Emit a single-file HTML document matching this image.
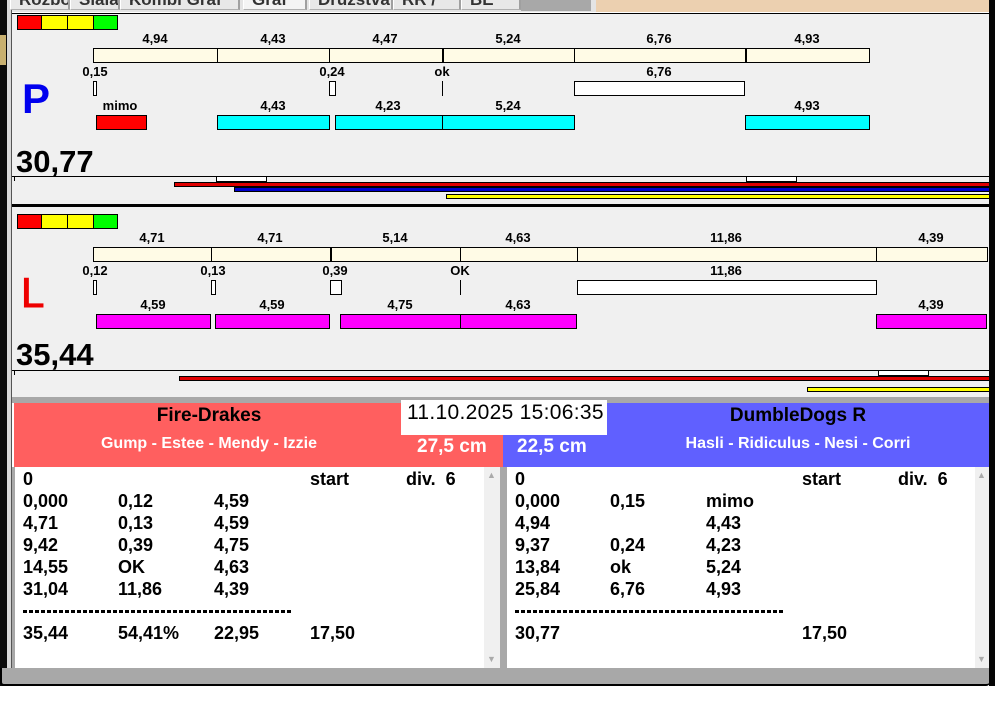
<!DOCTYPE html>
<html><head><meta charset="utf-8"><style>
*{margin:0;padding:0;box-sizing:border-box}
body{width:995px;height:716px;background:#fff;position:relative;overflow:hidden;font-family:"Liberation Sans",Arial,sans-serif;font-weight:bold;color:#000}
.a{position:absolute}
.t{position:absolute;font-size:13px;font-weight:bold;line-height:13px;transform:translateX(-50%);white-space:nowrap}
.bar{position:absolute;border:1px solid #000}
.cr{background:#fffbe6}
.cy{background:#00ffff}
.mg{background:#ff00ff}
.li{position:absolute;font-size:18px;line-height:22px;white-space:nowrap}
.tab{position:absolute;top:0;height:10px;background:#e8e8e8;border-right:2px solid #a0a0a0;border-left:1px solid #fff;border-bottom:1px solid #b0b0b0;overflow:hidden}
.tab span{position:absolute;top:-10px;left:8px;font-size:17px;color:#333}
.dash{position:absolute;height:3px;background:repeating-linear-gradient(90deg,#000 0 4px,transparent 4px 6px)}
</style></head><body>
<!-- frame -->
<div class="a" style="left:0;top:0;width:7px;height:686px;background:#0a0a0a"></div>
<div class="a" style="left:0;top:35px;width:6px;height:30px;background:#c8b070"></div>
<div class="a" style="left:7px;top:0;width:5px;height:686px;background:#d8d8d8;border-right:1px solid #555"></div>
<div class="a" style="left:0;top:668px;width:990px;height:18px;background:#a8a8a8;border-bottom:2px solid #000;border-left:2px solid #000;border-radius:0 0 4px 4px"></div>
<div class="a" style="left:989px;top:0;width:6px;height:686px;background:#050505"></div>
<!-- tabs -->
<div class="a" style="left:12px;top:0;width:977px;height:12px;background:#e4e4e4"></div>
<div class="tab" style="left:10px;width:60px"><span>Rozbor</span></div>
<div class="tab" style="left:70px;width:50px"><span>Slala</span></div>
<div class="tab" style="left:120px;width:120px"><span>Kombi Graf</span></div>
<div class="tab" style="left:243px;width:64px;background:#f4f4f4"><span>Graf</span></div>
<div class="tab" style="left:309px;width:84px"><span>Družstva</span></div>
<div class="tab" style="left:393px;width:68px"><span>RR / ST</span></div>
<div class="tab" style="left:461px;width:60px"><span>BE</span></div>
<div class="a" style="left:521px;top:0;width:70px;height:11px;background:#a8a8a8"></div>
<div class="a" style="left:596px;top:0;width:393px;height:12px;background:#ecd0b0"></div>

<!-- panel 1 -->
<div class="a" style="left:12px;top:13px;width:977px;height:191px;background:#f0f0f0;border-top:1px solid #000"></div>
<div class="a" style="left:17px;top:15px;width:101px;height:15px;border:1px solid #000;display:flex"><div style="width:24px;background:#f00;border-right:1px solid #000"></div><div style="width:26px;background:#ff0;border-right:1px solid #000"></div><div style="width:26px;background:#ff0;border-right:1px solid #000"></div><div style="flex:1;background:#0f0"></div></div>
<div class="t" style="left:155px;top:32px">4,94</div><div class="t" style="left:273px;top:32px">4,43</div><div class="t" style="left:385px;top:32px">4,47</div><div class="t" style="left:508px;top:32px">5,24</div><div class="t" style="left:659px;top:32px">6,76</div><div class="t" style="left:807px;top:32px">4,93</div>
<div class="bar cr" style="left:93px;top:48px;width:125px;height:15px"></div><div class="bar cr" style="left:217px;top:48px;width:113px;height:15px"></div><div class="bar cr" style="left:329px;top:48px;width:114px;height:15px"></div><div class="bar cr" style="left:442px;top:48px;width:133px;height:15px;border-left-width:2px"></div><div class="bar cr" style="left:574px;top:48px;width:172px;height:15px"></div><div class="bar cr" style="left:745px;top:48px;width:125px;height:15px;border-left-width:2px"></div>
<div class="t" style="left:95px;top:65px">0,15</div><div class="t" style="left:332px;top:65px">0,24</div><div class="t" style="left:442px;top:65px">ok</div><div class="t" style="left:659px;top:65px">6,76</div>
<div class="bar" style="left:93px;top:81px;width:4px;height:15px;background:#fff"></div><div class="bar" style="left:329px;top:81px;width:7px;height:15px;background:#fff"></div><div class="a" style="left:442px;top:81px;width:1px;height:15px;background:#000"></div><div class="bar" style="left:574px;top:81px;width:171px;height:15px;background:#fff"></div>
<div class="a" style="left:22px;top:76px;font-size:42px;line-height:46px;color:#0000ee">P</div>
<div class="t" style="left:120px;top:99px">mimo</div><div class="t" style="left:273px;top:99px">4,43</div><div class="t" style="left:388px;top:99px">4,23</div><div class="t" style="left:508px;top:99px">5,24</div><div class="t" style="left:807px;top:99px">4,93</div>
<div class="bar" style="left:96px;top:115px;width:51px;height:15px;background:#f00"></div><div class="bar cy" style="left:217px;top:115px;width:113px;height:15px"></div><div class="bar cy" style="left:335px;top:115px;width:108px;height:15px"></div><div class="bar cy" style="left:442px;top:115px;width:133px;height:15px"></div><div class="bar cy" style="left:745px;top:115px;width:125px;height:15px"></div>
<div class="a" style="left:16px;top:145px;font-size:31px;line-height:34px">30,77</div>
<div class="a" style="left:12px;top:176px;width:977px;height:1px;background:#000"></div>
<div class="a" style="left:14px;top:176px;width:1px;height:5px;background:#000"></div>
<div class="bar" style="left:216px;top:176px;width:51px;height:6px;background:#fff"></div><div class="bar" style="left:746px;top:176px;width:51px;height:6px;background:#fff"></div>
<div class="bar" style="left:174px;top:182px;width:815px;height:5px;background:#e00000;border-right:0"></div>
<div class="bar" style="left:234px;top:187px;width:755px;height:5px;background:#0000cc;border-right:0"></div>
<div class="bar" style="left:446px;top:194px;width:543px;height:5px;background:#ffff00;border-right:0"></div>
<div class="a" style="left:12px;top:204px;width:977px;height:3px;background:#000"></div>

<!-- panel 2 -->
<div class="a" style="left:12px;top:207px;width:977px;height:190px;background:#f0f0f0"></div>
<div class="a" style="left:17px;top:214px;width:101px;height:15px;border:1px solid #000;display:flex"><div style="width:24px;background:#f00;border-right:1px solid #000"></div><div style="width:26px;background:#ff0;border-right:1px solid #000"></div><div style="width:26px;background:#ff0;border-right:1px solid #000"></div><div style="flex:1;background:#0f0"></div></div>
<div class="t" style="left:152px;top:231px">4,71</div><div class="t" style="left:270px;top:231px">4,71</div><div class="t" style="left:395px;top:231px">5,14</div><div class="t" style="left:518px;top:231px">4,63</div><div class="t" style="left:726px;top:231px">11,86</div><div class="t" style="left:931px;top:231px">4,39</div>
<div class="bar cr" style="left:93px;top:247px;width:119px;height:15px"></div><div class="bar cr" style="left:211px;top:247px;width:120px;height:15px"></div><div class="bar cr" style="left:330px;top:247px;width:131px;height:15px;border-left-width:2px"></div><div class="bar cr" style="left:460px;top:247px;width:118px;height:15px"></div><div class="bar cr" style="left:577px;top:247px;width:300px;height:15px"></div><div class="bar cr" style="left:876px;top:247px;width:112px;height:15px"></div>
<div class="t" style="left:95px;top:264px">0,12</div><div class="t" style="left:213px;top:264px">0,13</div><div class="t" style="left:335px;top:264px">0,39</div><div class="t" style="left:460px;top:264px">OK</div><div class="t" style="left:726px;top:264px">11,86</div>
<div class="bar" style="left:93px;top:280px;width:4px;height:15px;background:#fff"></div><div class="bar" style="left:211px;top:280px;width:5px;height:15px;background:#fff"></div><div class="bar" style="left:330px;top:280px;width:12px;height:15px;background:#fff"></div><div class="a" style="left:460px;top:280px;width:1px;height:15px;background:#000"></div><div class="bar" style="left:577px;top:280px;width:300px;height:15px;background:#fff"></div>
<div class="a" style="left:21px;top:271px;font-size:42px;line-height:44px;color:#ee0000;font-weight:normal;-webkit-text-stroke:1px #ee0000">L</div>
<div class="t" style="left:153px;top:298px">4,59</div><div class="t" style="left:272px;top:298px">4,59</div><div class="t" style="left:400px;top:298px">4,75</div><div class="t" style="left:518px;top:298px">4,63</div><div class="t" style="left:931px;top:298px">4,39</div>
<div class="bar mg" style="left:96px;top:314px;width:115px;height:15px"></div><div class="bar mg" style="left:215px;top:314px;width:115px;height:15px"></div><div class="bar mg" style="left:340px;top:314px;width:121px;height:15px"></div><div class="bar mg" style="left:460px;top:314px;width:117px;height:15px"></div><div class="bar mg" style="left:876px;top:314px;width:111px;height:15px"></div>
<div class="a" style="left:16px;top:338px;font-size:31px;line-height:34px">35,44</div>
<div class="a" style="left:12px;top:370px;width:977px;height:1px;background:#000"></div>
<div class="a" style="left:14px;top:370px;width:1px;height:5px;background:#000"></div>
<div class="bar" style="left:878px;top:370px;width:51px;height:6px;background:#fff"></div>
<div class="bar" style="left:179px;top:376px;width:810px;height:5px;background:#e00000;border-right:0"></div>
<div class="bar" style="left:807px;top:387px;width:182px;height:5px;background:#ffff00;border-right:0"></div>

<!-- headers -->
<div class="a" style="left:12px;top:397px;width:977px;height:6px;background:#a8a8a8"></div>
<div class="a" style="left:14px;top:403px;width:489px;height:64px;background:#ff5f5f"></div>
<div class="a" style="left:503px;top:403px;width:486px;height:64px;background:#6060ff"></div>
<div class="a" style="left:401px;top:400px;width:206px;height:35px;background:#fff;font-weight:normal;font-size:21px;line-height:24px;padding:1px 0 0 6px;letter-spacing:0.3px">11.10.2025 15:06:35</div>
<div class="a" style="left:14px;top:404px;width:390px;text-align:center;font-size:19px;line-height:24px">Fire-Drakes</div>
<div class="a" style="left:14px;top:434px;width:390px;text-align:center;font-size:16px;line-height:20px;color:#fff">Gump - Estee - Mendy - Izzie</div>
<div class="a" style="left:417px;top:436px;font-size:19px;line-height:22px;color:#fff">27,5 cm</div>
<div class="a" style="left:517px;top:436px;font-size:19px;line-height:22px;color:#fff">22,5 cm</div>
<div class="a" style="left:607px;top:404px;width:382px;text-align:center;font-size:19px;line-height:24px">DumbleDogs R</div>
<div class="a" style="left:607px;top:434px;width:382px;text-align:center;font-size:16px;line-height:20px;color:#fff">Hasli - Ridiculus - Nesi - Corri</div>

<!-- lists -->
<div class="a" style="left:12px;top:467px;width:977px;height:201px;background:#a8a8a8"></div>
<div class="a" style="left:15px;top:467px;width:469px;height:201px;background:#fff"></div>
<div class="a" style="left:484px;top:467px;width:16px;height:201px;background:#f0f0f0"></div>
<div class="a" style="left:487px;top:470px;font-size:9px;color:#aaa">▲</div><div class="a" style="left:487px;top:654px;font-size:9px;color:#aaa">▼</div>
<div class="a" style="left:507px;top:467px;width:468px;height:201px;background:#fff"></div>
<div class="a" style="left:975px;top:467px;width:14px;height:201px;background:#f0f0f0"></div>
<div class="a" style="left:977px;top:470px;font-size:9px;color:#aaa">▲</div><div class="a" style="left:977px;top:654px;font-size:9px;color:#aaa">▼</div>

<div class="li" style="left:23px;top:468px">0<br>0,000<br>4,71<br>9,42<br>14,55<br>31,04<br><br>35,44</div>
<div class="li" style="left:118px;top:490px">0,12<br>0,13<br>0,39<br>OK<br>11,86<br><br>54,41%</div>
<div class="li" style="left:214px;top:490px">4,59<br>4,59<br>4,75<br>4,63<br>4,39<br><br>22,95</div>
<div class="li" style="left:310px;top:468px">start<br><br><br><br><br><br><br>17,50</div>
<div class="li" style="left:406px;top:468px">div.&nbsp; 6</div>
<div class="dash" style="left:23px;top:610px;width:270px"></div>

<div class="li" style="left:515px;top:468px">0<br>0,000<br>4,94<br>9,37<br>13,84<br>25,84<br><br>30,77</div>
<div class="li" style="left:610px;top:490px">0,15<br><br>0,24<br>ok<br>6,76</div>
<div class="li" style="left:706px;top:490px">mimo<br>4,43<br>4,23<br>5,24<br>4,93</div>
<div class="li" style="left:802px;top:468px">start<br><br><br><br><br><br><br>17,50</div>
<div class="li" style="left:898px;top:468px">div.&nbsp; 6</div>
<div class="dash" style="left:515px;top:610px;width:270px"></div>
</body></html>
